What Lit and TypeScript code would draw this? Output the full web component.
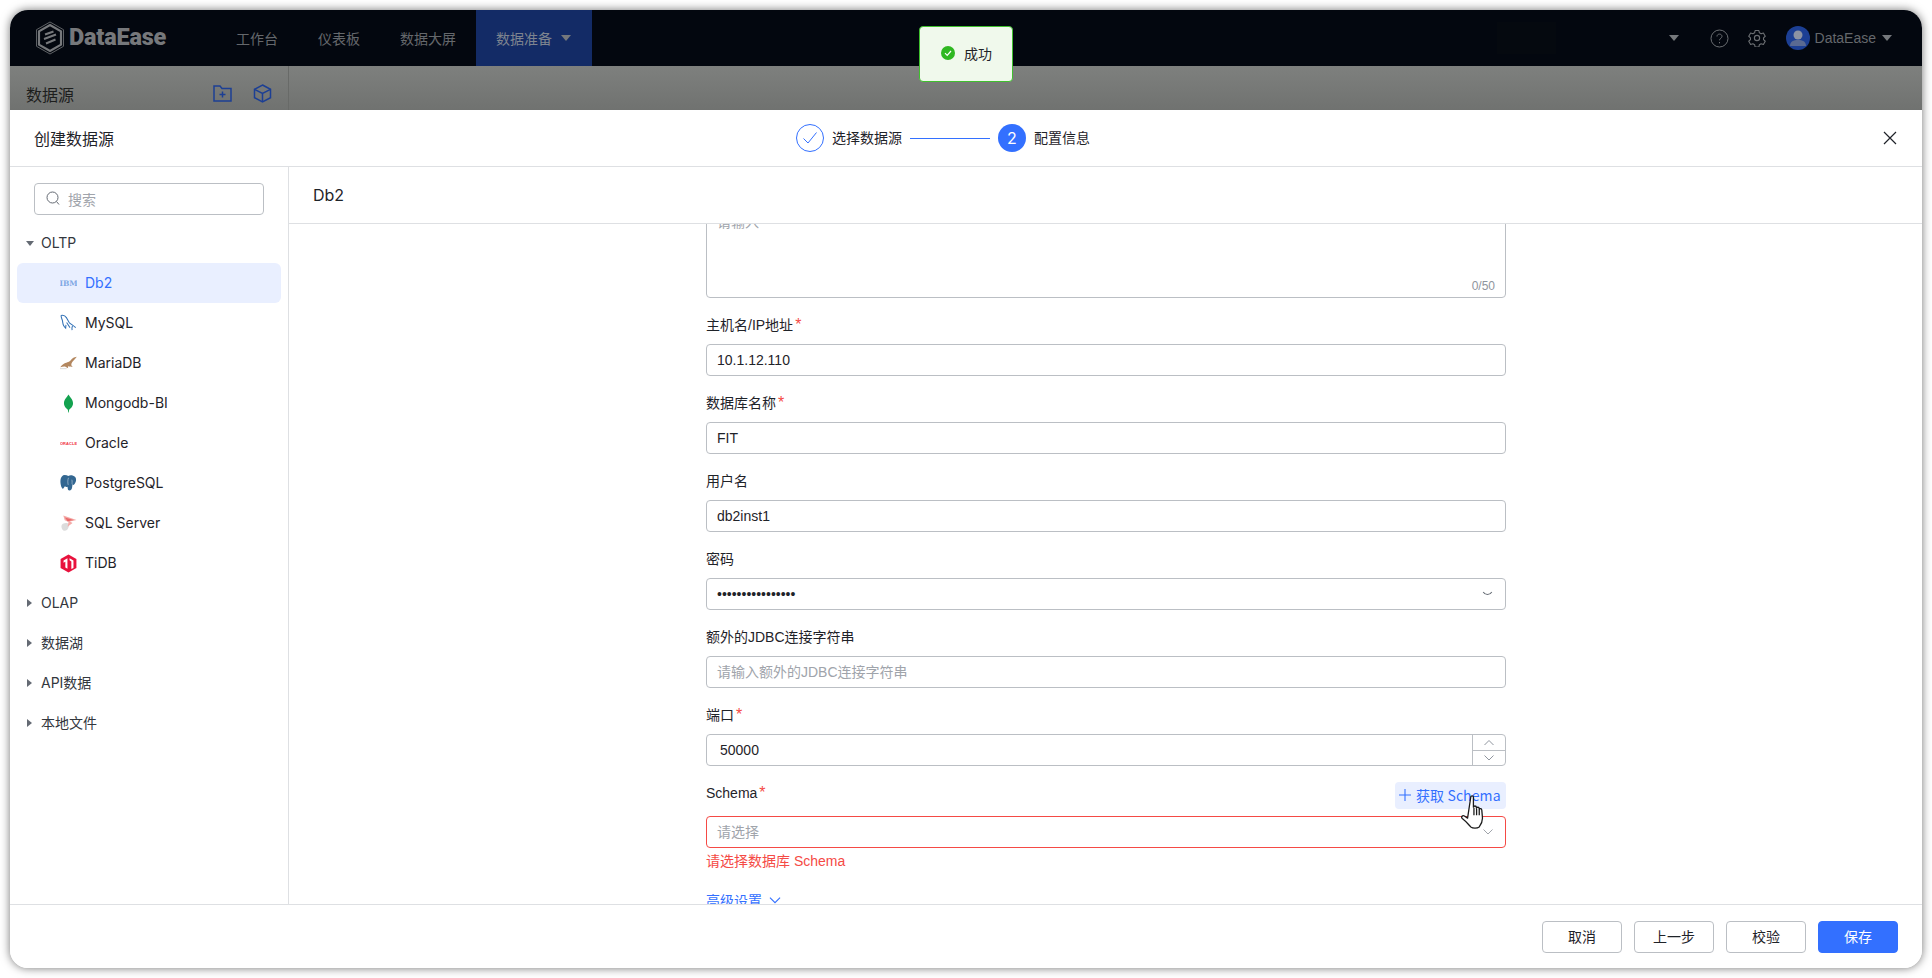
import { LitElement, html, css } from "lit";
import { customElement } from "lit/decorators.js";

const chevDown = html`<svg width="12" height="8" viewBox="0 0 12 8" fill="none" stroke="currentColor" stroke-width="1"><path d="M1.500 1.500 6 6l4.500-4.500"/></svg>`;
const chevUp = html`<svg width="12" height="8" viewBox="0 0 12 8" fill="none" stroke="currentColor" stroke-width="1"><path d="M1.500 6 6 1.500 10.500 6"/></svg>`;

const icons: Record<string, unknown> = {
  ibm: html`<svg width="18" height="12" viewBox="0 0 18 12"><text x="9" y="9.200" text-anchor="middle" font-family="DejaVu Serif" font-weight="700" font-size="8" fill="#7fa8e4">IBM</text></svg>`,
  mysql: html`<svg width="18" height="18" viewBox="0 0 18 18" fill="none" stroke="#2f6fb5" stroke-width="1.100"><path d="M1.200 1c2.600-.5 4.500.6 5.800 2.600 1.100 1.800 1.600 3.700 3 5.200 1.500 1.500 4 2.700 6.600 5.200"/><path d="M1.200 1c-.3 2 .9 3.500 1.300 5.200.5 1.900.4 3.800 1.300 5.500.5 1 1.300 1.900 2.200 2.800l.3-3.500"/><path d="M7 8.500c1.300 1.700 2.400 3.700 3.600 5.400M13.200 12c-.6 1.500-.8 3-.4 4.500"/></svg>`,
  maria: html`<svg width="18" height="14" viewBox="0 0 18 14"><path d="M17.800.5c-1.200.5-2.800.3-4 1.200-2 1.500-2.700 3.400-5 4.300C6 7 3 7.500.3 11.500c2-.7 3.400-1 5-.8l3.300 1.800-.2-2c1.800.5 3.200.6 5.200.7-1.400-1-2-2.100-1.400-3.800.6-1.800 3.400-3.800 5.600-6.900z" fill="#b3875f"/><path d="M0 13h7" stroke="#d0d0d0" stroke-width=".8"/></svg>`,
  mongo: html`<svg width="11" height="19" viewBox="0 0 10 18"><path d="M5 .5C6 2.500 9.300 5 9.300 8.800c0 3.400-2.500 5-3.700 6.200L5.200 17.500H4.700L4.400 15C3.200 13.800.7 12.200.7 8.800.7 5 4 2.500 5 .5z" fill="#13a24f"/></svg>`,
  oracle: html`<svg width="18" height="8" viewBox="0 0 18 8"><text x="9" y="5.600" text-anchor="middle" font-family="Liberation Sans" font-weight="700" font-size="4.200" letter-spacing=".1" fill="#f0303c">ORACLE</text></svg>`,
  pg: html`<svg width="18" height="18" viewBox="0 0 18 18"><path d="M5 .5c1.500 0 2.700.5 3.700 1 1.300-.6 3-.8 4.600-.4 2.700.7 4.100 2.700 3.700 5.300-.2 1.500-1 3-1.800 4-.5.6-1.300.7-2 .5-.3 1.700-.2 3.800-1.200 5.100-.9 1.200-2.900 1.300-3.500.1-.4-.8-.4-2.100-.5-3.100-1 .3-2 .3-2.800-.5-.9 1.200-1.600 3-2.800 2.400C.5 11.900.3 8 .5 5.700.8 2.700 2.700.5 5 .5z" fill="#336791"/><path d="M9 3.500c-.8 2-1 5-.3 7.500M12.500 5.500c.8 1.800-.3 3.800.7 5.300" stroke="#cfdbe6" stroke-width=".6" fill="none"/></svg>`,
  sql: html`<svg width="18" height="19" viewBox="0 0 18 18"><path d="M1.500 12c0-2.400 3-3.600 5.500-3.400 2 .2 3 1.800 2.300 3.800-.7 2.400-2.200 4.400-4.500 4.400C3 16.800 1.500 14.500 1.500 12z" fill="#dcdcdc"/><path d="M3.500.5l14 4.700-7 1.800 2.800 1.500-5.300 4 1-5L5 5.500z" fill="#f4aba8"/><path d="M5.200 2.700 14.500 5.300 8 6.700z" fill="#e9696a"/></svg>`,
  tidb: html`<svg width="17" height="19" viewBox="0 0 16 18"><path d="M8 .4l7.500 4.300v8.600L8 17.600.5 13.300V4.700z" fill="#e8123d"/><path d="M3.300 6.200 7 4v10l-2-1.100V7.300L3.300 8.200zM9 4l3.700 2.200v7L10.700 14.200V7L9 6z" fill="#fff"/></svg>`,
};

@customElement("app-root")
export class AppRoot extends LitElement {
  static styles = css`
    :host { display: block; width: 1932px; height: 978px; overflow: hidden; background: #fff; font-family: "Liberation Sans", "Noto Sans CJK SC", sans-serif; font-size: 14px; color: #1f2329; }
    .frame { padding: 10px; height: 958px; width: 1912px; position: relative; box-sizing: content-box; }
    .win { position: relative; width: 1912px; height: 958px; border-radius: 18px; overflow: hidden; display: flex; flex-direction: column; background: #fff; }
    .shadow { position: absolute; left: 10px; top: 10px; width: 1912px; height: 958px; border-radius: 18px; box-shadow: 0 0 10px rgba(0,0,0,.55); }

    .top { height: 56px; flex: none; background: #03070f; display: flex; align-items: stretch; color: #65686c; }
    .logo { width: 206px; display: flex; align-items: center; padding-left: 25px; box-sizing: border-box; gap: 4px; color: #76787b; }
    .logo b { font: 900 23.500px/1 "Roboto", sans-serif; letter-spacing: -.2px; }
    .nav { display: flex; align-items: center; padding: 0 20px; font-family: "Noto Sans CJK SC", sans-serif; gap: 9px; }
    .nav.on { background: #132b66; color: #7e848f; padding-right: 21px; }
    .tri { width: 0; height: 0; border-left: 5px solid transparent; border-right: 5px solid transparent; border-top: 6px solid #75787c; }
    .grow { flex: 1; }
    .ghost { width: 59px; height: 32px; align-self: center; background: #05090f; margin-right: 113px; }
    .tools { display: flex; align-items: center; }
    .tools .help { margin-left: 31px; }
    .tools .gear { margin-left: 19px; }
    .avatar { width: 24px; height: 24px; border-radius: 50%; margin-left: 20px; background: #1c3f94; overflow: hidden; flex: none; }
    .uname { margin-left: 5px; color: #65686c; }
    .tools .t2 { margin: 0 30px 0 6px; }

    .band { height: 44px; flex: none; background: linear-gradient(#7e807e, #707270); display: flex; }
    .band-l { width: 279px; box-sizing: border-box; border-right: 1px solid #686a68; display: flex; align-items: center; padding: 11px 0 0 16px; font: 16px "Noto Sans CJK SC", sans-serif; color: #1d1e1d; }
    .band-l span { flex: 1; }
    .band-l svg { margin-right: 21px; }
    .band-l svg + svg { margin-right: 16px; }

    .drawer-head { height: 57px; flex: none; box-sizing: border-box; border-bottom: 1px solid #dee0e3; display: grid; grid-template-columns: 762px auto 1fr; align-items: center; padding: 0 24px; }
    .drawer-title { font: 16px "Noto Sans CJK SC", sans-serif; padding-bottom: 1px; }
    .steps { display: flex; align-items: center; font-family: "Noto Sans CJK SC", sans-serif; color: #1f2329; }
    .circle { width: 28px; height: 28px; border-radius: 50%; box-sizing: border-box; display: flex; align-items: center; justify-content: center; }
    .circle.done { border: 1px solid #3370ff; }
    .circle.cur { background: #3370ff; color: #fff; font: 16px "Inter", sans-serif; }
    .steps .lbl { margin-left: 8px; padding-bottom: 2px; }
    .steps .line { width: 80px; height: 1px; background: #3370ff; margin: 0 8px; }
    .close { justify-self: end; display: flex; margin-right: 1px; }

    .main { flex: 1; display: flex; min-height: 0; }
    .side { width: 279px; flex: none; box-sizing: border-box; border-right: 1px solid #dee0e3; padding: 16px 7px 0; font-family: "Inter", "Noto Sans CJK SC", sans-serif; }
    .search { margin: 0 17px 8px; height: 32px; width: 230px; box-sizing: border-box; border: 1px solid #bbbfc4; border-radius: 4px; display: flex; align-items: center; padding: 0 0 1px 11px; gap: 8px; color: #a0a4ab; font-family: "Noto Sans CJK SC", sans-serif; }
    .node { height: 40px; display: flex; align-items: center; border-radius: 6px; color: #1f2329; line-height: 1; }
    .node.group { padding-left: 9px; gap: 8px; color: #33373d; }
    .node.leaf { padding-left: 43px; }
    .node.on { background: #e9efff; color: #3370ff; }
    .ic { width: 17px; margin-right: 8px; display: flex; justify-content: center; }
    .arr-r { width: 0; height: 0; border-top: 4px solid transparent; border-bottom: 4px solid transparent; border-left: 5px solid #646a73; margin: 0 1px; }
    .arr-d { width: 0; height: 0; border-left: 4px solid transparent; border-right: 4px solid transparent; border-top: 5px solid #646a73; margin-right: -1px; }

    .panel { flex: 1; display: flex; flex-direction: column; min-width: 0; }
    .ptitle { height: 57px; flex: none; box-sizing: border-box; border-bottom: 1px solid #dee0e3; display: flex; align-items: center; padding-left: 24px; padding-bottom: 1px; font: 16px "Inter", sans-serif; }
    .scroll { flex: 1; min-height: 0; overflow: hidden; }
    .form { width: 800px; margin: -18px 0 0 417px; display: flex; flex-direction: column; }
    .item { margin-bottom: 16px; }
    .label { height: 22px; line-height: 22px; margin-bottom: 8px; display: flex; justify-content: space-between; align-items: flex-start; }
    .label.tall { height: 26px; }
    .label i { font-style: normal; font-size: 16px; line-height: 16px; color: #f54a45; margin-left: 2px; }
    .field { height: 32px; box-sizing: border-box; border: 1px solid #bbbfc4; border-radius: 4px; display: flex; align-items: center; padding: 0 10px; position: relative; line-height: 22px; }
    .ph { color: #a0a4ab; }
    .area { height: 92px; align-items: flex-start; padding: 4px 10px; }
    .count { position: absolute; right: 10px; bottom: 1px; font-size: 12px; line-height: 20px; color: #8f959e; }
    .eye { position: absolute; right: 12px; top: 11px; color: #646a73; display: flex; }
    .num { padding-left: 13px; }
    .steppers { position: absolute; right: 0; top: 0; bottom: 0; width: 32px; border-left: 1px solid #bbbfc4; display: grid; grid-template-rows: 1fr 1fr; color: #8f959e; }
    .steppers div { display: flex; align-items: center; justify-content: center; }
    .steppers div + div { border-top: 1px solid #bbbfc4; }
    .err { border-color: #f54a45; }
    .sel-arrow { position: absolute; right: 11px; top: 11px; color: #a0a4ab; display: flex; }
    .errmsg { color: #f54a45; line-height: 22px; margin-top: 2px; }
    .fetch { height: 26px; background: #e9efff; border-radius: 4px; color: #3370ff; display: flex; align-items: center; padding: 0 4px 1px; gap: 5px; font-family: "Noto Sans CJK SC", sans-serif; width: 103px; white-space: nowrap; }
    .fetch span { letter-spacing: .1px; }
    .adv { color: #3370ff; line-height: 22px; margin-top: 17px; display: flex; align-items: center; gap: 6px; font-family: "Noto Sans CJK SC", sans-serif; }
    .adv svg { width: 14px; height: 9px; }

    .foot { height: 64px; flex: none; box-sizing: border-box; border-top: 1px solid #dee0e3; display: flex; justify-content: flex-end; align-items: center; gap: 12px; padding: 0 24px 0 0; }
    .btn { width: 80px; height: 32px; box-sizing: border-box; border: 1px solid #bbbfc4; border-radius: 4px; display: flex; align-items: center; justify-content: center; padding-bottom: 2px; font-family: "Noto Sans CJK SC", sans-serif; }
    .btn.primary { background: #3370ff; border-color: #3370ff; color: #fff; }

    .toast { position: absolute; left: 919px; top: 26px; width: 94px; height: 56px; box-sizing: border-box; border: 1px solid #3fbf2e; border-radius: 4px; background: #f0f9ec; display: flex; align-items: center; padding: 0 0 2px 21px; gap: 9px; font-family: "Noto Sans CJK SC", sans-serif; color: #1f2329; }
    .cursor { position: absolute; left: 1461px; top: 795px; display: flex; }
  `;

  render() {
    const leaves: [string, string, boolean?][] = [["ibm", "Db2", true], ["mysql", "MySQL"], ["maria", "MariaDB"], ["mongo", "Mongodb-BI"], ["oracle", "Oracle"], ["pg", "PostgreSQL"], ["sql", "SQL Server"], ["tidb", "TiDB"]];
    return html`
      <div class="shadow"></div>
      <div class="frame">
        <div class="win">
          <div class="top">
            <div class="logo">
              <svg width="30" height="34" viewBox="0 0 30 34" fill="none" stroke="#76787b">
                <path d="M15 1 28.500 8.700v16.600L15 33 1.500 25.300V8.700z" stroke-width=".8"/>
                <path d="M15 4 26 10.300v13.400L15 30 4 23.700V10.300z" stroke-width="2.200"/>
                <path d="M10 13.500 18.500 10.500M9 18 21 13.500M11 22.500 20.500 18.500" stroke-width="2"/>
              </svg>
              <b>DataEase</b>
            </div>
            <div class="nav">工作台</div>
            <div class="nav">仪表板</div>
            <div class="nav">数据大屏</div>
            <div class="nav on">数据准备<span class="tri"></span></div>
            <div class="grow"></div>
            <div class="ghost"></div>
            <div class="tools">
              <span class="tri"></span>
              <svg class="help" width="19" height="19" viewBox="0 0 19 19" fill="none" stroke="#6c6f73"><circle cx="9.500" cy="9.500" r="8.500"/><path d="M7 7.500c0-1.500 1.100-2.400 2.500-2.400s2.500 1 2.500 2.300c0 1.800-2.500 1.900-2.500 3.900"/><path d="M9.500 13v1.300"/></svg>
              <svg class="gear" width="18" height="18" viewBox="0 0 24 24" fill="none" stroke="#6c6f73" stroke-width="1.500" stroke-linejoin="round"><circle cx="12" cy="12" r="3.500"/><path d="M9.500 2h5l.7 3.100 2.300 1.300 3-1 2.500 4.300-2.300 2.100v2.400l2.300 2.100-2.500 4.300-3-1-2.300 1.300-.7 3.100h-5l-.7-3.100-2.300-1.300-3 1L1 16.300l2.300-2.100v-2.400L1 9.700l2.500-4.300 3 1 2.300-1.300z"/></svg>
              <div class="avatar"><svg width="24" height="24" viewBox="0 0 24 24"><circle cx="12" cy="9" r="4.500" fill="#8c93a3"/><path d="M4 20c0-4.500 3.500-6 8-6s8 1.500 8 6z" fill="#5a6a92"/></svg></div>
              <span class="uname">DataEase</span>
              <span class="tri t2"></span>
            </div>
          </div>

          <div class="band">
            <div class="band-l">
              <span>数据源</span>
              <svg width="19" height="17" viewBox="0 0 19 17" fill="none" stroke="#1c3f94" stroke-width="1.500"><path d="M1 1h6l2 2.500h9V16H1z"/><path d="M9.500 6.500v6M6.500 9.500h6"/></svg>
              <svg width="19" height="19" viewBox="0 0 19 19" fill="none" stroke="#1c3f94" stroke-width="1.500"><path d="M9.500 1 17.500 5.300v8.400L9.500 18l-8-4.300V5.300z"/><path d="M1.500 5.300l8 4.200 8-4.200M9.500 9.500V18"/></svg>
            </div>
          </div>

          <div class="drawer-head">
            <div class="drawer-title">创建数据源</div>
            <div class="steps">
              <div class="circle done"><svg width="16" height="14" viewBox="0 0 16 14" fill="none" stroke="#3370ff"><path d="M1.500 7.500 6 12 14.500 1.500"/></svg></div>
              <span class="lbl">选择数据源</span>
              <span class="line"></span>
              <div class="circle cur">2</div>
              <span class="lbl">配置信息</span>
            </div>
            <div class="close"><svg width="14" height="14" viewBox="0 0 14 14" fill="none" stroke="#1f2329" stroke-width="1.200"><path d="M1 1l12 12M13 1 1 13"/></svg></div>
          </div>

          <div class="main">
            <div class="side">
              <div class="search">
                <svg width="14" height="15" viewBox="0 0 14 15" fill="none" stroke="#646a73"><circle cx="6.500" cy="6.500" r="5.500"/><path d="M10.500 10.500 13 13.500"/></svg>
                <span>搜索</span>
              </div>
              <div class="node group"><span class="arr-d"></span>OLTP</div>
              ${leaves.map(([ic, name, on]) => html`<div class="node leaf ${on ? "on" : ""}"><span class="ic">${icons[ic]}</span>${name}</div>`)}
              ${["OLAP", "数据湖", "API数据", "本地文件"].map((g) => html`<div class="node group"><span class="arr-r"></span>${g}</div>`)}
            </div>

            <div class="panel">
              <div class="ptitle">Db2</div>
              <div class="scroll">
                <div class="form">
                  <div class="item"><div class="field area"><span class="ph">请输入</span><span class="count">0/50</span></div></div>
                  <div class="item"><div class="label"><span>主机名/IP地址<i>*</i></span></div><div class="field">10.1.12.110</div></div>
                  <div class="item"><div class="label"><span>数据库名称<i>*</i></span></div><div class="field">FIT</div></div>
                  <div class="item"><div class="label"><span>用户名</span></div><div class="field">db2inst1</div></div>
                  <div class="item"><div class="label"><span>密码</span></div><div class="field">••••••••••••••••<span class="eye"><svg width="11" height="7" viewBox="0 0 14 8" fill="none" stroke="currentColor" stroke-width="1.300"><path d="M1.500 2c1.500 2.300 3.300 3.400 5.500 3.400S11 4.300 12.500 2"/></svg></span></div></div>
                  <div class="item"><div class="label"><span>额外的JDBC连接字符串</span></div><div class="field"><span class="ph">请输入额外的JDBC连接字符串</span></div></div>
                  <div class="item"><div class="label"><span>端口<i>*</i></span></div><div class="field num">50000<div class="steppers"><div>${chevUp}</div><div>${chevDown}</div></div></div></div>
                  <div>
                    <div class="label tall"><span>Schema<i>*</i></span>
                      <div class="fetch"><svg width="12" height="12" viewBox="0 0 12 12" fill="none" stroke="#3370ff" stroke-width="1.100"><path d="M6 0v12M0 6h12"/></svg><span>获取 Schema</span></div>
                    </div>
                    <div class="field err"><span class="ph">请选择</span><span class="sel-arrow">${chevDown}</span></div>
                    <div class="errmsg">请选择数据库 Schema</div>
                  </div>
                  <div class="adv">高级设置 ${chevDown}</div>
                </div>
              </div>
            </div>
          </div>

          <div class="foot">
            <div class="btn">取消</div>
            <div class="btn">上一步</div>
            <div class="btn">校验</div>
            <div class="btn primary">保存</div>
          </div>
        </div>
        <div class="toast">
          <svg width="14" height="14" viewBox="0 0 14 14"><circle cx="7" cy="7" r="7" fill="#2fb821"/><path d="M4 7.200 6.200 9.400 10 5" fill="none" stroke="#fff" stroke-width="1.200"/></svg>
          <span>成功</span>
        </div>
        <div class="cursor">
          <svg width="28" height="35" viewBox="0 0 26 33" fill="#fff" stroke="#1a1a1a" stroke-width="1.200" stroke-linejoin="round"><path d="M9 2c0-1.500 2.500-1.500 2.500 0v9.500c.2-1.500 2.700-1.500 2.800 0v1c.2-1.300 2.600-1.300 2.700.2v1c.3-1.200 2.300-1 2.400.4l.6 7c.3 4-1.400 7-3 9-2 1.500-6 1.500-8 0-2-2-4-5-8-8-1.500-1.500.3-3.300 2-2.300l3 2z"/><path d="M12 12v7M14.500 13v6M17 14v5" fill="none"/></svg>
        </div>
      </div>
    `;
  }
}
